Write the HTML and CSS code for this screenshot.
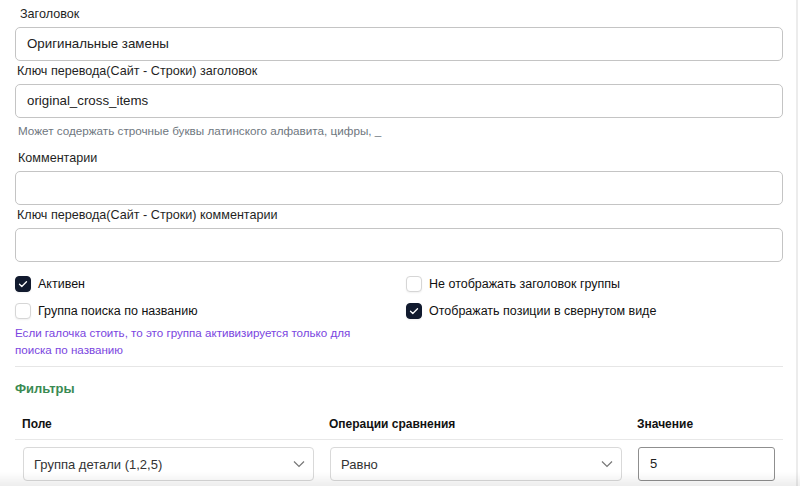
FILE: index.html
```html
<!DOCTYPE html>
<html lang="ru">
<head>
<meta charset="utf-8">
<link rel="stylesheet" href="styles.css">
</head>
<body>
<div class="page">
  <div class="form">
    <label class="label first">Заголовок</label>
    <div class="input">Оригинальные замены</div>
    <label class="label">Ключ перевода(Сайт - Строки) заголовок</label>
    <div class="input">original_cross_items</div>
    <div class="hint">Может содержать строчные буквы латинского алфавита, цифры, _</div>
    <label class="label spaced">Комментарии</label>
    <div class="input"></div>
    <label class="label">Ключ перевода(Сайт - Строки) комментарии</label>
    <div class="input"></div>

    <div class="checks">
      <div class="col">
        <div class="check"><span class="box on"><svg viewBox="0 0 16 16" width="16" height="16"><path d="M4.5 8.2l2.3 2.3 4.7-4.8" fill="none" stroke="#fff" stroke-width="1.3" stroke-linecap="round" stroke-linejoin="round"/></svg></span><span>Активен</span></div>
        <div class="check"><span class="box"></span><span>Группа поиска по названию</span></div>
        <div class="purple">Если галочка стоить, то это группа активизируется только для поиска по названию</div>
      </div>
      <div class="col">
        <div class="check"><span class="box"></span><span>Не отображать заголовок группы</span></div>
        <div class="check"><span class="box on"><svg viewBox="0 0 16 16" width="16" height="16"><path d="M4.5 8.2l2.3 2.3 4.7-4.8" fill="none" stroke="#fff" stroke-width="1.3" stroke-linecap="round" stroke-linejoin="round"/></svg></span><span>Отображать позиции в свернутом виде</span></div>
      </div>
    </div>

    <div class="divider"></div>

    <div class="section">Фильтры</div>

    <div class="table">
      <div class="thead">
        <div class="th">Поле</div>
        <div class="th">Операции сравнения</div>
        <div class="th">Значение</div>
      </div>
      <div class="trow">
        <div class="td"><div class="select"><span>Группа детали (1,2,5)</span><svg width="12" height="8" viewBox="0 0 12 8"><path d="M1 1.5l5 5 5-5" fill="none" stroke="#777" stroke-width="1.2"/></svg></div></div>
        <div class="td"><div class="select"><span>Равно</span><svg width="12" height="8" viewBox="0 0 12 8"><path d="M1 1.5l5 5 5-5" fill="none" stroke="#777" stroke-width="1.2"/></svg></div></div>
        <div class="td"><div class="value">5</div></div>
      </div>
    </div>
  </div>
</div>
<div class="bottom-shade"></div>
</body>
</html>
```
FILE: styles.css
```css
* { box-sizing: border-box; }
html, body { margin: 0; padding: 0; background: #fff; }
body {
  font-family: "Liberation Sans", Arial, sans-serif;
  color: #1d1d1f;
  overflow: hidden;
  height: 486px;
}
.page {
  width: 798px;
  height: 486px;
  border-right: 2px solid #ececec;
}
.form {
  width: 783px;
  padding: 6px 0 0 15px;
  display: flex;
  flex-direction: column;
}
.label {
  display: block;
  font-size: 12.6px;
  line-height: 16px;
  padding-left: 2px;
  margin-bottom: 5px;
  color: #1f1f1f;
}
.label.first { padding-left: 5px; }
.label.spaced { margin-top: 11px; padding-left: 3px; }
.input {
  height: 34px;
  border: 1px solid #c4c4c4;
  border-radius: 5px;
  padding: 0 11px;
  font-size: 13.3px;
  line-height: 32px;
  color: #222;
  margin-bottom: 2px;
}
.hint {
  font-size: 11.7px;
  line-height: 16px;
  color: #6f7780;
  margin-top: 3px;
  padding-left: 3px;
}
.checks {
  display: grid;
  grid-template-columns: 391px 1fr;
  margin-top: 12px;
}
.check {
  display: flex;
  align-items: center;
  gap: 7px;
  height: 16px;
  margin-bottom: 11px;
  font-size: 12.5px;
  color: #111;
}
.box {
  width: 16px;
  height: 16px;
  border: 1px solid #d6d6d6;
  border-radius: 4px;
  box-shadow: 0 1px 2px rgba(0,0,0,0.06);
  background: #fff;
  flex: none;
  display: flex;
}
.box.on {
  background: #111a2e;
  border-color: #111a2e;
}
.box svg { margin: -1px; }
.purple {
  font-size: 11.6px;
  line-height: 17px;
  color: #7a45e0;
  margin-top: -6px;
  width: 345px;
}
.divider {
  height: 1px;
  background: #e6e6e6;
  margin-top: 8px;
}
.section {
  font-weight: bold;
  font-size: 13px;
  line-height: 16px;
  color: #3a8a52;
  margin-top: 14px;
}
.table { margin-top: 19px; }
.thead, .trow {
  display: grid;
  grid-template-columns: 307px 308px 153px;
}
.thead { border-bottom: 1px solid #e8e8e8; }
.th {
  font-weight: bold;
  font-size: 12px;
  line-height: 16px;
  padding: 0 8px 7px 7px;
  color: #111;
}
.td { padding: 7px 8px; }
.select {
  height: 34px;
  border: 1px solid #d9d9d9;
  border-radius: 4px;
  display: flex;
  align-items: center;
  justify-content: space-between;
  padding: 0 8px 0 10px;
  font-size: 13px;
  color: #333;
}
.value {
  height: 34px;
  border: 1px solid #8f8f8f;
  border-radius: 3px;
  font-size: 13px;
  line-height: 32px;
  padding: 0 11px;
  color: #222;
}
.bottom-shade {
  position: fixed;
  left: 0;
  right: 0;
  bottom: 0;
  height: 14px;
  background: linear-gradient(to bottom, rgba(0,0,0,0), rgba(0,0,0,0.07));
  pointer-events: none;
}
```
